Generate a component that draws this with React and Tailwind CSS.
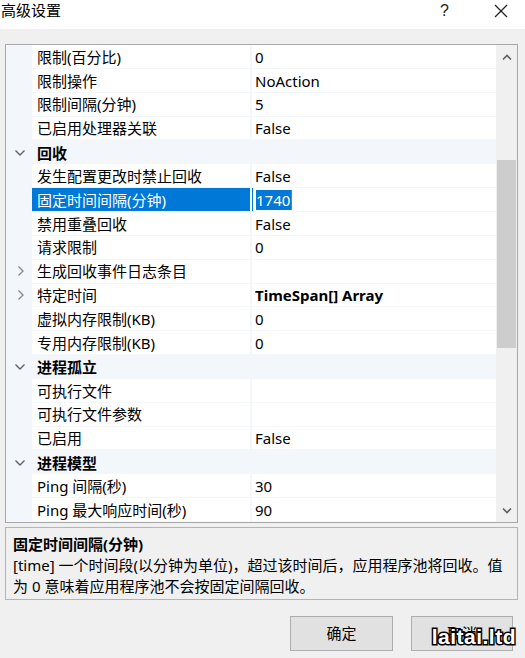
import React from "react";

const rows = [
  { n: "限制(百分比)", v: "0" },
  { n: "限制操作", v: "NoAction" },
  { n: "限制间隔(分钟)", v: "5" },
  { n: "已启用处理器关联", v: "False" },
  { cat: "回收" },
  { n: "发生配置更改时禁止回收", v: "False" },
  { n: "固定时间间隔(分钟)", v: "1740", sel: true },
  { n: "禁用重叠回收", v: "False" },
  { n: "请求限制", v: "0" },
  { n: "生成回收事件日志条目", v: "", exp: true },
  { n: "特定时间", v: "TimeSpan[] Array", exp: true, bold: true },
  { n: "虚拟内存限制(KB)", v: "0" },
  { n: "专用内存限制(KB)", v: "0" },
  { cat: "进程孤立" },
  { n: "可执行文件", v: "" },
  { n: "可执行文件参数", v: "" },
  { n: "已启用", v: "False" },
  { cat: "进程模型" },
  { n: "Ping 间隔(秒)", v: "30" },
  { n: "Ping 最大响应时间(秒)", v: "90" },
];

const font = { fontFamily: '"Noto Sans", "Noto Sans CJK SC", sans-serif' };

function ChevronDown() {
  return (
    <svg width="12" height="8" viewBox="0 0 12 8">
      <polyline points="1.5,1.5 6,6 10.5,1.5" fill="none" stroke="#606060" strokeWidth="1.4" />
    </svg>
  );
}
function ChevronRight() {
  return (
    <svg width="8" height="12" viewBox="0 0 8 12">
      <polyline points="1.5,1.5 6,6 1.5,10.5" fill="none" stroke="#8a8a8a" strokeWidth="1.4" />
    </svg>
  );
}

function Row({ r }) {
  if (r.cat) {
    return (
      <div className="flex items-center bg-[#f3f6fa] pt-px">
        <div className="w-[26px] flex justify-center pl-[1px]">
          <ChevronDown />
        </div>
        <div className="pl-[5px] font-bold text-[15px] text-black">{r.cat}</div>
      </div>
    );
  }
  return (
    <div className="flex bg-[#f3f6fa] pb-px">
      <div className="w-[26px] flex items-center justify-center pl-[3px]">
        {r.exp ? <ChevronRight /> : null}
      </div>
      <div
        className={
          "w-[218px] flex items-center pl-[5px] pt-px text-[15px] whitespace-nowrap " +
          (r.sel ? "bg-[#0078d7] text-white" : "bg-white text-black")
        }
      >
        {r.n}
      </div>
      <div className="w-[2px]" />
      <div
        className={
          "flex-1 flex items-center pl-[3px] pt-px text-[15px] text-black whitespace-nowrap bg-white " +
          (r.sel ? "border-l border-[#0078d7] pl-[2px]" : "")
        }
      >
        {r.sel ? (
          <span className="bg-[#0078d7] text-white leading-[20px] pr-px border-r border-[#e06010]">{r.v}</span>
        ) : (
          <span className={r.bold ? "font-bold" : ""}>{r.v}</span>
        )}
      </div>
    </div>
  );
}

export default function App() {
  return (
    <div className="w-[525px] h-[658px] bg-[#f0f0f0] relative overflow-hidden" style={font}>
      {/* title bar */}
      <div className="h-[29px] bg-white flex items-center relative">
        <div className="pl-[1px] text-[15px] text-black leading-[20px] -mt-[9px]">高级设置</div>
        <div className="flex-1" />
        <div className="text-[16px] text-[#222] -mt-[8px] mr-[45px]" style={{ fontFamily: '"Liberation Sans", sans-serif' }}>?</div>
        <svg width="14" height="14" viewBox="0 0 14 14" className="mr-[17px] -mt-[7px]">
          <line x1="1" y1="1" x2="13" y2="13" stroke="#222" strokeWidth="1.2" />
          <line x1="13" y1="1" x2="1" y2="13" stroke="#222" strokeWidth="1.2" />
        </svg>
      </div>

      {/* property grid */}
      <div className="mx-[5px] mt-[15px] w-[513px] h-[479px] border border-[#a8a8a8] flex bg-white">
        <div className="flex-1 grid grid-rows-[repeat(20,minmax(0,1fr))]">
          {rows.map((r, i) => (
            <Row key={i} r={r} />
          ))}
        </div>
        <div className="w-[21px] bg-[#f0f0f0] flex flex-col">
          <div className="h-[24px] flex items-center justify-center">
            <svg width="10" height="7" viewBox="0 0 10 7">
              <polyline points="1,5.5 5,1.5 9,5.5" fill="none" stroke="#606060" strokeWidth="1.6" />
            </svg>
          </div>
          <div className="flex-1 px-[1px]">
            <div className="mt-[91px] h-[188px] bg-[#cdcdcd]" />
          </div>
          <div className="h-[24px] flex items-center justify-center">
            <svg width="10" height="7" viewBox="0 0 10 7">
              <polyline points="1,1.5 5,5.5 9,1.5" fill="none" stroke="#606060" strokeWidth="1.6" />
            </svg>
          </div>
        </div>
      </div>

      {/* description */}
      <div className="mx-[5px] mt-[4px] w-[513px] h-[73px] border border-[#b4b4b4] pl-[7px] pt-[6px] text-[15px] leading-[21px] text-black">
        <div className="font-bold">固定时间间隔(分钟)</div>
        <div>
          [time] 一个时间段(以分钟为单位)，超过该时间后，应用程序池将回收。值
          <br />
          为 0 意味着应用程序池不会按固定间隔回收。
        </div>
      </div>

      {/* buttons */}
      <div className="flex justify-end gap-[18px] mt-[16px] pr-[12px]">
        <button className="w-[103px] h-[35px] bg-[#e1e1e1] border border-[#adadad] text-[15px] text-black">确定</button>
        <button className="w-[102px] h-[35px] bg-[#e1e1e1] border border-[#adadad] text-[15px] text-black">取消</button>
      </div>

      {/* watermark */}
      <div
        className="absolute right-[9px] bottom-[6px] text-[21px] font-bold text-white tracking-[0.5px] [-webkit-text-stroke:3px_black] [paint-order:stroke_fill]"
        style={{ fontFamily: '"Liberation Sans", sans-serif' }}
      >
        laitai.ltd
      </div>
    </div>
  );
}
